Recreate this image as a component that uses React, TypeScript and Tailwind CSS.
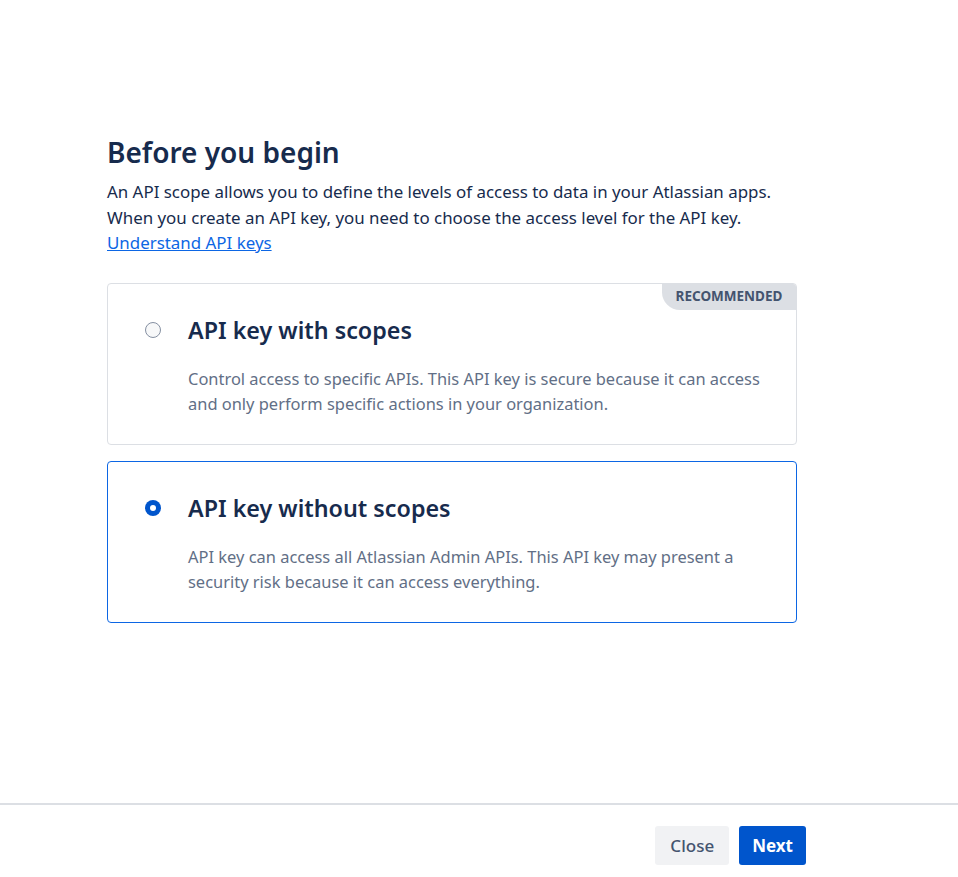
import { useState } from "react";

const options = [
  {
    id: "scoped",
    title: "API key with scopes",
    desc: "Control access to specific APIs. This API key is secure because it can access and only perform specific actions in your organization.",
    recommended: true,
  },
  {
    id: "unscoped",
    title: "API key without scopes",
    desc: "API key can access all Atlassian Admin APIs. This API key may present a security risk because it can access everything.",
    recommended: false,
  },
];

export default function App() {
  const [selected, setSelected] = useState("unscoped");

  return (
    <div
      className="flex h-[877px] flex-col bg-white text-[#172b4d]"
      style={{ fontFamily: '"Noto Sans", "Open Sans", sans-serif' }}
    >
      <main className="flex-1 pl-[107px] pt-[134px]">
        <div className="w-[690px]">
          <h1 className="text-[28px] font-semibold leading-[36px] text-[#172b4d]">Before you begin</h1>
          <p className="mt-[9px] text-[16.9px] leading-[25.5px]">
            An API scope allows you to define the levels of access to data in your Atlassian apps.
            <br />
            When you create an API key, you need to choose the access level for the API key.
            <br />
            <a href="#" className="text-[#0c66e4] underline">Understand API keys</a>
          </p>

          <div className="mt-[27px] flex flex-col gap-4">
            {options.map((o) => {
              const on = selected === o.id;
              return (
                <div
                  key={o.id}
                  onClick={() => setSelected(o.id)}
                  className={`relative flex cursor-pointer gap-[27px] rounded-[4px] border pb-[28px] pl-[37px] pr-8 pt-[30px] ${on ? "border-[#0c66e4]" : "border-[#dcdfe4]"}`}
                >
                  {o.recommended && (
                    <span className="absolute right-0 top-0 flex h-[26px] w-[134px] items-center justify-center rounded-bl-[18px] rounded-tr-[3px] bg-[#dcdfe4] text-[13.5px] font-bold text-[#44546f]">
                      RECOMMENDED
                    </span>
                  )}
                  <div className="flex h-8 items-center">
                    {on ? (
                      <span className="flex h-4 w-4 items-center justify-center rounded-full bg-[#0055cc]">
                        <span className="h-[6px] w-[6px] rounded-full bg-white" />
                      </span>
                    ) : (
                      <span className="h-4 w-4 rounded-full border-[1.5px] border-[#8590a2] bg-[#f7f8f9]" />
                    )}
                  </div>
                  <div>
                    <div className="text-[23.3px] font-semibold leading-[32px] text-[#172b4d]">{o.title}</div>
                    <p className="mt-[20px] text-[16.45px] leading-[25px] text-[#626f86]">{o.desc}</p>
                  </div>
                </div>
              );
            })}
          </div>
        </div>
      </main>

      <footer className="flex h-[74px] justify-end gap-[10px] border-t-2 border-[#dcdfe4] pr-[152px] pt-[21px]">
        <button className="h-[39px] rounded-[3px] bg-[#f1f2f4] px-[15px] text-[17px] font-medium text-[#44546f]">Close</button>
        <button className="h-[39px] rounded-[3px] bg-[#0055cc] px-[13px] text-[17px] font-bold text-white">Next</button>
      </footer>
    </div>
  );
}
